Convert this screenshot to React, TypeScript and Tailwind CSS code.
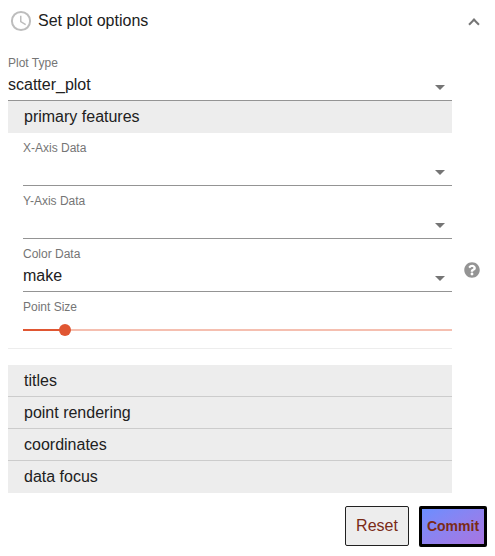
import { useState } from "react";
import type { ReactNode } from "react";
import { FaQuestionCircle } from "react-icons/fa";

type FieldProps = {
  id: string;
  label: string;
  options: string[];
  initial: string;
};

function ClockIcon() {
  return (
    <svg viewBox="0 0 24 24" className="size-6 text-[#bdbdbd]" fill="none" stroke="currentColor" aria-hidden="true">
      <circle cx="12" cy="12" r="9.1" strokeWidth="2" />
      <path d="M11.75 6.8v5.8l4.9 3" strokeWidth="1.5" />
    </svg>
  );
}

function Row({ children, aside }: { children: ReactNode; aside?: ReactNode }) {
  return (
    <div className="grid grid-cols-[1fr_35px] items-center">
      {children}
      {aside}
    </div>
  );
}

function SelectField({ id, label, options, initial }: FieldProps) {
  return (
    <div className="min-w-0 pt-[7px]">
      <label htmlFor={id} className="block text-xs leading-4 text-[#757575]">
        {label}
      </label>
      <div className="relative">
        <select
          id={id}
          defaultValue={initial}
          className="block h-[30px] w-full appearance-none border-b border-[#949494] bg-transparent pr-6 pb-0.5 text-base leading-6 text-[#212121] outline-none"
        >
          {options.map((option) => (
            <option key={option} value={option}>
              {option}
            </option>
          ))}
        </select>
        <span className="pointer-events-none absolute right-[7px] bottom-[11px] border-x-5 border-t-5 border-x-transparent border-t-[#757575]" />
      </div>
    </div>
  );
}

function Section({ title }: { title: string }) {
  return (
    <button type="button" className="block h-8 w-full bg-[#ededed] px-4 text-left leading-6">
      {title}
    </button>
  );
}

function PointSize() {
  const min = 1;
  const max = 24;
  const [value, setValue] = useState(3);
  const filled = ((value - min) / (max - min)) * 100;
  return (
    <div className="min-w-0 pt-[7px]">
      <label htmlFor="point-size" className="block text-xs leading-4 text-[#757575]">
        Point Size
      </label>
      <div className="flex h-[33px] items-start pt-[9px]">
        <input
          id="point-size"
          type="range"
          min={min}
          max={max}
          value={value}
          onChange={(event) => setValue(Number(event.target.value))}
          style={{
            backgroundImage: `linear-gradient(to right, #e05632 ${filled}%, #f5bfb0 ${filled}%)`,
          }}
          className="block h-3 w-full cursor-pointer appearance-none bg-[length:100%_2px] bg-center bg-no-repeat outline-none [&::-webkit-slider-thumb]:size-3 [&::-webkit-slider-thumb]:appearance-none [&::-webkit-slider-thumb]:rounded-full [&::-webkit-slider-thumb]:bg-[#e05632]"
        />
      </div>
    </div>
  );
}

export default function App() {
  return (
    <form
      onSubmit={(event) => event.preventDefault()}
      className="bg-white px-2 font-['Liberation_Sans',Arial,sans-serif] text-base text-[#212121]"
    >
      <button type="button" aria-expanded="true" className="flex h-[42px] w-full items-center pr-[9px] pl-px text-left">
        <ClockIcon />
        <span className="ml-[5px] flex-1 leading-6">Set plot options</span>
        <span className="mt-1.5 size-2 rotate-45 border-t-2 border-l-2 border-[#757575]" />
      </button>

      <div className="pt-1.5">
        <Row>
          <SelectField
            id="plot-type"
            label="Plot Type"
            initial="scatter_plot"
            options={["scatter_plot", "histogram", "box_plot"]}
          />
        </Row>
        <Row>
          <Section title="primary features" />
        </Row>

        <div className="pl-[15px]">
          <Row>
            <SelectField id="x-axis" label="X-Axis Data" initial="" options={["", "make", "year"]} />
          </Row>
          <Row>
            <SelectField id="y-axis" label="Y-Axis Data" initial="" options={["", "make", "year"]} />
          </Row>
          <Row
            aside={
              <button type="button" aria-label="Help" className="mt-2 ml-3 w-4">
                <FaQuestionCircle size={16} className="text-[#949494]" />
              </button>
            }
          >
            <SelectField id="color" label="Color Data" initial="make" options={["make", "year"]} />
          </Row>
          <Row>
            <PointSize />
          </Row>
        </div>

        <Row>
          <hr className="border-[#ededed]" />
        </Row>
        <Row>
          <div className="mt-4 divide-y divide-[#cccccc]">
            <Section title="titles" />
            <Section title="point rendering" />
            <Section title="coordinates" />
            <Section title="data focus" />
          </div>
        </Row>
      </div>

      <div className="mt-[13px] flex items-start justify-end gap-2.5">
        <button
          type="reset"
          className="h-10 w-16 rounded-xs border border-[#212121] bg-[#ededed] text-base text-[#7a2a16]"
        >
          Reset
        </button>
        <button
          type="submit"
          className="h-[41px] w-[68px] rounded-xs border-3 border-black bg-linear-to-br from-[#6a8eff] to-[#a874e0] pb-px text-sm font-bold text-[#7a2a16]"
        >
          Commit
        </button>
      </div>
    </form>
  );
}
